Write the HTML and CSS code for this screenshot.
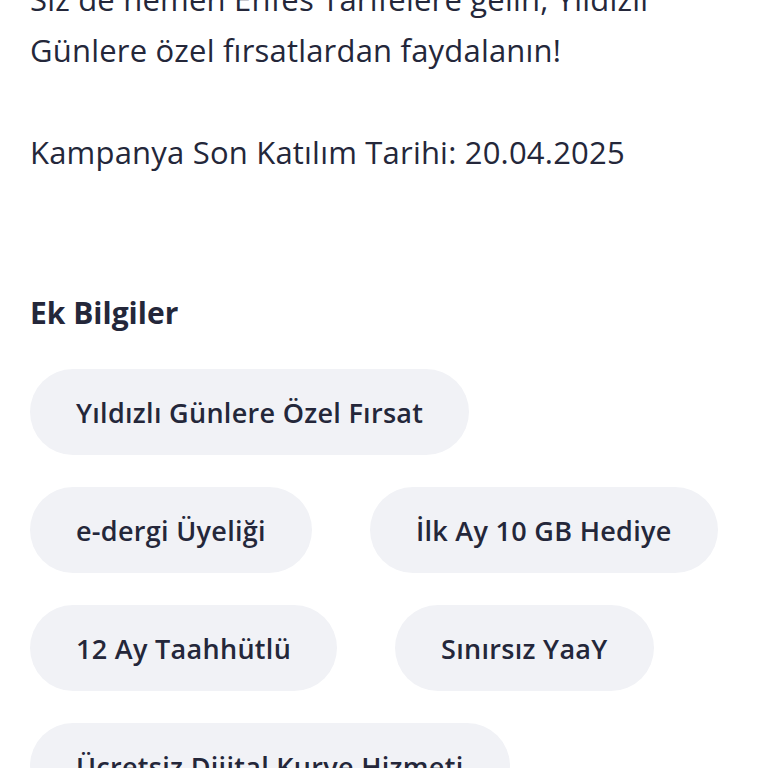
FILE: index.html
```html
<!DOCTYPE html>
<html lang="tr">

<head>
    <meta charset="UTF-8">
    <meta name="viewport" content="width=device-width, initial-scale=1.0">
    <title>Kampanya Detayı</title>
    <link rel="stylesheet" href="styles.css">
</head>

<body>

    <div class="page">
        <p class="description">
            Siz de hemen Enfes Tarifelere gelin, Yıldızlı<br>
            Günlere özel fırsatlardan faydalanın!<br>
            <br>
            Kampanya Son Katılım Tarihi: 20.04.2025
        </p>

        <h2 class="section-title">Ek Bilgiler</h2>

        <div class="chips">
            <span class="chip">Yıldızlı Günlere Özel Fırsat</span>
            <span class="chip">e-dergi Üyeliği</span>
            <span class="chip">İlk Ay 10 GB Hediye</span>
            <span class="chip">12 Ay Taahhütlü</span>
            <span class="chip">Sınırsız YaaY</span>
            <span class="chip">Ücretsiz Dijital Kurye Hizmeti</span>
        </div>
    </div>

</body>

</html>
```

FILE: styles.css
```css
body {
    font-family: 'Open Sans', 'Noto Sans', sans-serif;
    background-color: #ffffff;
    color: #24273a;
    margin: 0;
    overflow: hidden;
}

.page {
    padding: 0 30px;
    margin-top: -26px;
}

.description {
    font-size: 31px;
    letter-spacing: 0.2px;
    line-height: 51px;
    margin: 0;
}

.section-title {
    font-size: 30px;
    font-weight: 700;
    margin: 115px 0 0;
    line-height: 40px;
}

.chips {
    display: flex;
    flex-wrap: wrap;
    gap: 32px 58px;
    margin-top: 36px;
}

.chip {
    display: inline-flex;
    align-items: center;
    height: 86px;
    padding: 0 46px;
    border-radius: 43px;
    background-color: #f1f2f6;
    font-size: 27px;
    font-weight: 600;
    letter-spacing: 0.3px;
}
```
